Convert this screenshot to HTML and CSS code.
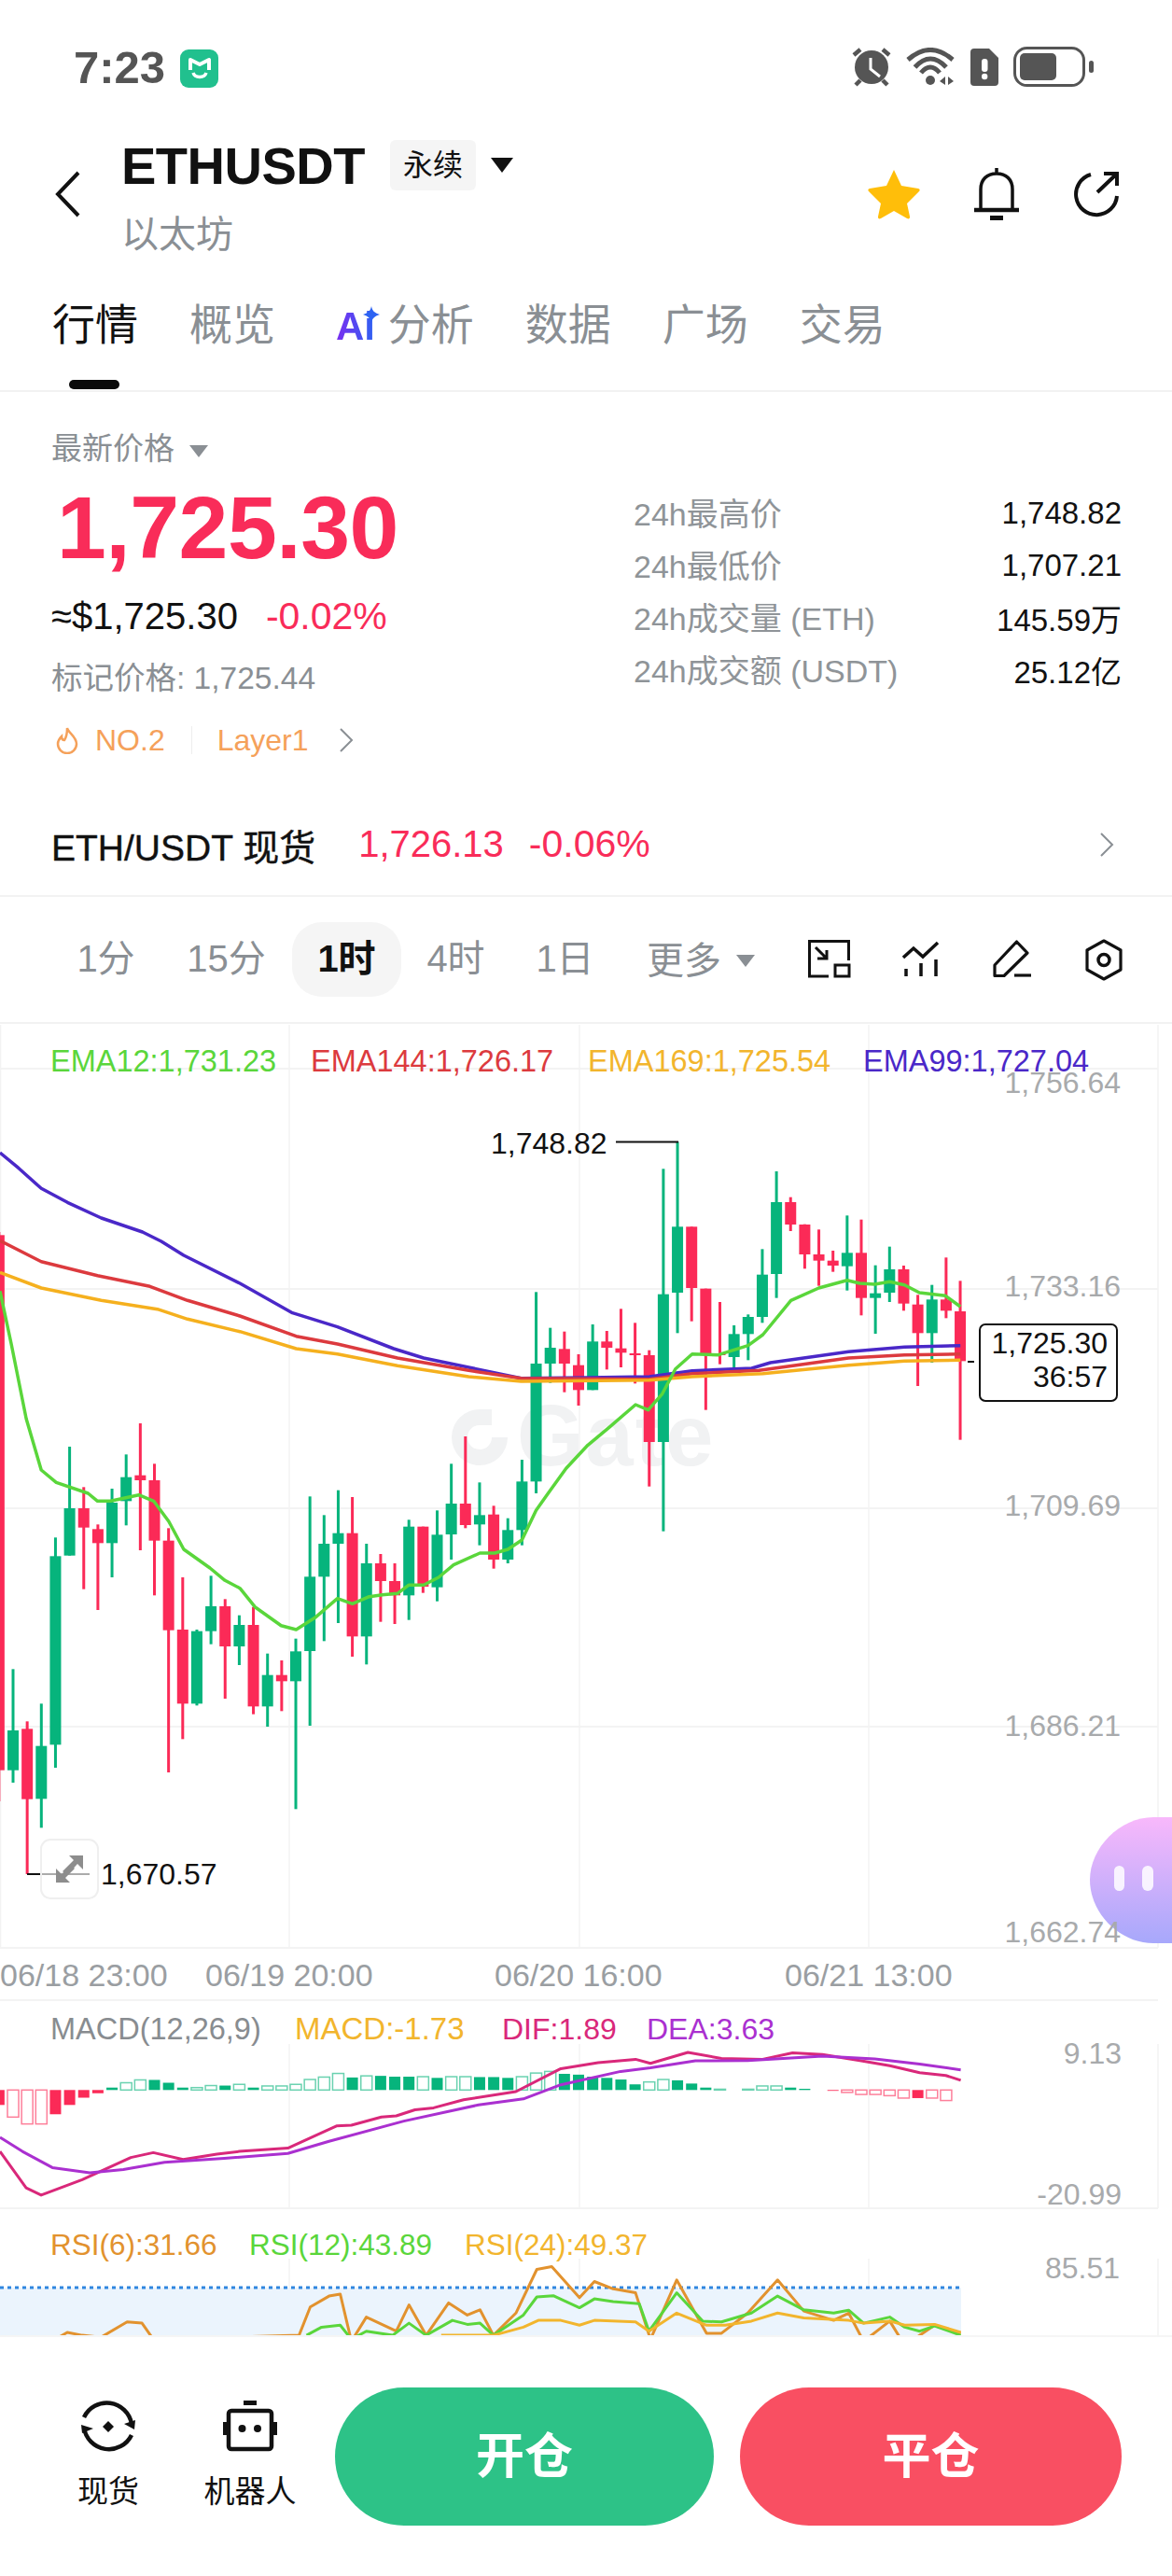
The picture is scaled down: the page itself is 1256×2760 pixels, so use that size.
FILE: index.html
```html
<!DOCTYPE html>
<html lang="zh-CN">
<head>
<meta charset="UTF-8">
<meta name="viewport" content="width=device-width, initial-scale=1.0">
<title>ETHUSDT</title>
<link rel="stylesheet" href="styles.css">
<script type="text/javascript" src="chart.js"></script>
</head>
<body>

<div class="status">
	<span class="clock">7:23</span>
	<svg class="mi" width="41" height="41" viewBox="0 0 41 41">
		<rect width="41" height="41" rx="9" fill="#21c08e"/>
		<path d="M11 22V11l10 5 10-5v11" fill="none" stroke="#fff" stroke-width="4" stroke-linejoin="round"/>
		<path d="M14 25c2 6 12 6 14 0" fill="none" stroke="#fff" stroke-width="3.500"/>
	</svg>
	<div class="status-right">
		<svg width="42" height="42" viewBox="0 0 42 42">
			<circle cx="21" cy="21" r="18" fill="#555"/>
			<path d="M20 11v12l10 8" fill="none" stroke="#fff" stroke-width="3"/>
			<path d="M2 8l7-6M40 8l-7-6M4 40l5-5M38 40l-5-5" stroke="#555" stroke-width="4.500" fill="none"/>
		</svg>
		<svg width="53" height="41" viewBox="0 0 53 41">
			<path d="M2 13Q26 -8 50 13M9.500 21Q26 3 43 21M16 27Q26 15 36 27" fill="none" stroke="#555" stroke-width="5"/>
			<circle cx="26" cy="35" r="5" fill="#555"/>
			<path d="M36 36l6-5v9zM45 31v9l6-4z" fill="#555"/>
		</svg>
		<svg width="30" height="40" viewBox="0 0 30 40">
			<path d="M4 0H20L30 10V36a4 4 0 0 1-4 4H4a4 4 0 0 1-4-4V4a4 4 0 0 1 4-4z" fill="#555"/>
			<rect x="12" y="11" width="6.500" height="14" rx="3" fill="#fff"/>
			<circle cx="15.200" cy="30" r="3.200" fill="#fff"/>
		</svg>
		<svg width="86" height="43" viewBox="0 0 86 43">
			<rect x="1.500" y="1.500" width="74" height="40" rx="13" fill="none" stroke="#555" stroke-width="3"/>
			<rect x="7" y="7" width="39" height="29" rx="5" fill="#555"/>
			<rect x="81" y="15" width="5" height="13" rx="2.500" fill="#555"/>
		</svg>
	</div>
</div>

<div class="head">
	<svg class="back" width="28" height="50" viewBox="0 0 28 50">
		<path d="M25 2L3 25l22 23" fill="none" stroke="#111" stroke-width="4"/>
	</svg>
	<div class="head-title">
		<div class="title-row">
			<span class="symbol">ETHUSDT</span>
			<span class="badge">永续</span>
			<span class="tri tri-black"></span>
		</div>
		<div class="sub">以太坊</div>
	</div>
	<div class="head-icons">
		<svg width="56" height="54" viewBox="0 0 56 54">
			<path d="M28 1l8 17 18 3c2 .500 2 2 1 3L42 37l3 14c.300 2-1 3-3 2L28 45l-14 8c-2 1-3.300 0-3-2l3-14L1 24c-1-1-1-2.500 1-3l18-3z" fill="#ffbe0a"/>
		</svg>
		<svg width="48" height="57" viewBox="0 0 48 57">
			<path d="M24 1v6M7 45V24C7 13 14 7 24 7s17 6 17 17v21" fill="none" stroke="#111" stroke-width="3.500"/>
			<path d="M0 46h48" stroke="#111" stroke-width="4.500"/>
			<rect x="17" y="52" width="14" height="5" fill="#111"/>
		</svg>
		<svg width="50" height="50" viewBox="0 0 50 50">
			<path d="M19 4A22 22 0 1 0 47 27" fill="none" stroke="#111" stroke-width="4"/>
			<path d="M26 23L46 4M33 3h14v13" fill="none" stroke="#111" stroke-width="4"/>
		</svg>
	</div>
</div>

<div class="tabs">
	<div class="tab tab-on">行情</div>
	<div class="tab">概览</div>
	<div class="tab tab-ai">
		<span class="ai">Ai</span>
		<svg class="spark" width="18" height="18" viewBox="0 0 18 18">
			<path d="M9 0c1 5 3 7 9 9-6 2-8 4-9 9-1-5-3-7-9-9 6-2 8-4 9-9z" fill="#2d63f2"/>
		</svg>
		分析
	</div>
	<div class="tab">数据</div>
	<div class="tab">广场</div>
	<div class="tab">交易</div>
</div>

<div class="quote">
	<div class="quote-left">
		<div class="latest">最新价格<span class="tri tri-gray"></span></div>
		<div class="price">1,725.30</div>
		<div class="usd">≈$1,725.30<span class="pct">-0.02%</span></div>
		<div class="mark">标记价格: 1,725.44</div>
		<div class="tags">
			<svg width="24" height="30" viewBox="0 0 24 30">
				<path d="M12 2c1 5 10 9 10 17a10 10 0 0 1-20 0c0-4 2-6 4-8 0 3 1 4 3 4 2-3 3-8 3-13z" fill="none" stroke="#f5a15a" stroke-width="2.500"/>
			</svg>
			<span class="tag-no">NO.2</span>
			<span class="tag-sep"></span>
			<span>Layer1</span>
			<svg class="tag-more" width="16" height="26" viewBox="0 0 16 26">
				<path d="M2 1l12 12L2 25" fill="none" stroke="#8a8f94" stroke-width="2"/>
			</svg>
		</div>
	</div>
	<div class="stats">
		<div class="stat"><span>24h最高价</span><b>1,748.82</b></div>
		<div class="stat"><span>24h最低价</span><b>1,707.21</b></div>
		<div class="stat"><span>24h成交量 (ETH)</span><b>145.59万</b></div>
		<div class="stat"><span>24h成交额 (USDT)</span><b>25.12亿</b></div>
	</div>
</div>

<div class="spot">
	<span class="spot-name">ETH/USDT 现货</span>
	<span class="spot-price">1,726.13</span>
	<span class="spot-pct">-0.06%</span>
	<svg class="spot-more" width="16" height="26" viewBox="0 0 16 26">
		<path d="M2 1l12 12L2 25" fill="none" stroke="#8a8f94" stroke-width="2"/>
	</svg>
</div>

<div class="frames">
	<div class="tf tf-gap">1分</div>
	<div class="tf tf-gap">15分</div>
	<div class="tf tf-on">1时</div>
	<div class="tf">4时</div>
	<div class="tf">1日</div>
	<div class="tf-more">更多<span class="tri tri-gray"></span></div>
	<div class="tools">
		<svg width="46" height="42" viewBox="0 0 46 42">
			<path d="M22 39H1.500V1.500H43.500V22" fill="none" stroke="#111" stroke-width="3"/>
			<rect x="29" y="27" width="15" height="12" fill="none" stroke="#111" stroke-width="3"/>
			<path d="M8 8l12 12M20 11v9h-10" fill="none" stroke="#111" stroke-width="3"/>
		</svg>
		<svg width="40" height="40" viewBox="0 0 40 40">
			<path d="M1 18L12 8l10 9L38 2" fill="none" stroke="#111" stroke-width="3.500"/>
			<path d="M4 30v8M20 24v14M36 20v18" fill="none" stroke="#111" stroke-width="3.500"/>
		</svg>
		<svg width="42" height="42" viewBox="0 0 42 42">
			<path d="M25.500 2L37 14 12 38.500H2V27z" fill="none" stroke="#111" stroke-width="3.200" stroke-linejoin="round"/>
			<path d="M23 38h18" stroke="#111" stroke-width="3.200"/>
		</svg>
		<svg width="40" height="45" viewBox="0 0 40 45">
			<path d="M20 2l18 10v21L20 43 2 33V12z" fill="none" stroke="#111" stroke-width="3.200" stroke-linejoin="round"/>
			<circle cx="20" cy="22.500" r="6" fill="none" stroke="#111" stroke-width="3.500"/>
		</svg>
	</div>
</div>

<div class="chart">
	<svg id="plot" width="1256" height="1405" viewBox="0 1097 1256 1405">
		<defs>
			<linearGradient id="bubble" x1="0" y1="0" x2="0" y2="1">
				<stop offset="0" stop-color="#f8b8fb"/>
				<stop offset="1" stop-color="#a7a8fb"/>
			</linearGradient>
		</defs>
		<g id="grid"></g>

		<!-- watermark -->
		<path d="M514 1510a30 30 0 1 0 30 30h-30v-13h13v-17z" fill="#f1f2f3"/>
		<circle cx="514" cy="1540" r="13" fill="#fff"/>
		<text class="watermark" x="554" y="1570">Gate</text>

		<g id="candles"></g>
		<g id="lines"></g>

		<text class="t leg c-green" x="54" y="1148">EMA12:1,731.23</text>
		<text class="t leg c-red" x="333" y="1148">EMA144:1,726.17</text>
		<text class="t leg c-yellow" x="630" y="1148">EMA169:1,725.54</text>
		<text class="t leg c-purple" x="925" y="1148">EMA99:1,727.04</text>

		<path d="M660 1223.500H727" stroke="#111" stroke-width="2"/>
		<text class="t" x="526" y="1236">1,748.82</text>
		<path d="M1037 1459H1044" stroke="#111" stroke-width="2"/>
		<rect class="tick-box" x="1050" y="1419" width="147" height="82" rx="6"/>
		<text class="t end" x="1187" y="1450">1,725.30</text>
		<text class="t end" x="1187" y="1486">36:57</text>

		<path d="M29 2008H96" stroke="#111" stroke-width="2"/>
		<rect class="expand" x="44" y="1971" width="61" height="63" rx="10"/>
		<path d="M89 1988H74l5 5-12 12 5 4 11-12 6 6zM60 2017h15l-5-5 10-10-4-4-10 10-6-6z" fill="#8d8d8d"/>
		<text class="t" x="108" y="2019">1,670.57</text>

		<path d="M1256 1947h-20c-36 0-68 33-68 67 0 36 32 68 68 68h20z" fill="url(#bubble)"/>
		<rect x="1194" y="1999" width="11" height="27" rx="5.500" fill="#fff" opacity=".85"/>
		<rect x="1224" y="1999" width="12" height="27" rx="6" fill="#fff" opacity=".85"/>

		<text class="t end axis" x="1201" y="1171">1,756.64</text>
		<text class="t end axis" x="1201" y="1389">1,733.16</text>
		<text class="t end axis" x="1201" y="1624">1,709.69</text>
		<text class="t end axis" x="1201" y="1860">1,686.21</text>
		<text class="t end axis" x="1201" y="2081">1,662.74</text>

		<text class="t time" x="0" y="2128">06/18 23:00</text>
		<text class="t time" x="220" y="2128">06/19 20:00</text>
		<text class="t time" x="530" y="2128">06/20 16:00</text>
		<text class="t time" x="841" y="2128">06/21 13:00</text>

		<text class="t leg c-gray" x="54" y="2185">MACD(12,26,9)</text>
		<text class="t macd-val c-yellow" x="316" y="2185">MACD:-1.73</text>
		<text class="t c-pink" x="538" y="2185">DIF:1.89</text>
		<text class="t c-violet" x="693" y="2185">DEA:3.63</text>
		<text class="t end axis" x="1202" y="2211">9.13</text>
		<text class="t end axis" x="1202" y="2362">-20.99</text>

		<text class="t rsi c-orange" x="54" y="2416">RSI(6):31.66</text>
		<text class="t rsi c-green" x="267" y="2416">RSI(12):43.89</text>
		<text class="t rsi c-yellow" x="498" y="2416">RSI(24):49.37</text>
		<text class="t end axis" x="1200" y="2441">85.51</text>
	</svg>
</div>

<div class="nav">
	<div class="nav-item">
		<svg width="58" height="58" viewBox="0 0 58 58">
			<path d="M3 19A27 27 0 0 1 54 26M54 38A27 27 0 0 1 3 30" fill="none" stroke="#111" stroke-width="4.500"/>
			<path d="M46 26l12-4-1 10zM0 27l13 4-12 5z" fill="#111"/>
			<path d="M29 23l6 6-6 6-6-6z" fill="#111"/>
		</svg>
		<span>现货</span>
	</div>
	<div class="nav-item">
		<svg width="58" height="58" viewBox="0 0 58 58">
			<rect x="22" y="1" width="14" height="5" fill="#111"/>
			<rect x="6" y="12" width="46" height="41" rx="3" fill="none" stroke="#111" stroke-width="4.500"/>
			<rect x="0" y="24" width="5" height="14" fill="#111"/>
			<rect x="53" y="24" width="5" height="14" fill="#111"/>
			<circle cx="20.500" cy="31" r="4" fill="#111"/>
			<circle cx="37" cy="31" r="4" fill="#111"/>
		</svg>
		<span>机器人</span>
	</div>
	<div class="btn btn-open">开仓</div>
	<div class="btn btn-close">平仓</div>
</div>

</body>
</html>
```

FILE: styles.css
```css
*{
	margin: 0;
	padding: 0;
	box-sizing: border-box;
}
html,body{
	width: 1256px;
	height: 2760px;
	overflow: hidden;
}
body{
	background-color: #fff;
	color: #111;
	font-family: "Liberation Sans", "Noto Sans CJK SC", sans-serif;
}
svg{
	display: block;
	flex: none;
}

/* triangles next to labels */
.tri{
	display: inline-block;
	width: 0;
	height: 0;
	border-style: solid;
	border-color: transparent;
	border-width: 16px 12px 0 12px;
}
.tri-black{
	border-top-color: #111;
	margin-left: 16px;
}
.tri-gray{
	border-width: 13px 10px 0 10px;
	border-top-color: #8a8f94;
	margin-left: 16px;
	vertical-align: middle;
}

/* status bar */
.status{
	height: 130px;
	padding: 50px 84px 0 79px;
	display: flex;
	align-items: flex-start;
}
.clock{
	font-size: 49px;
	line-height: 44px;
	font-weight: bold;
	color: #555;
}
.mi{
	margin: 3px 0 0 16px;
}
.status-right{
	margin-left: auto;
	display: flex;
	align-items: center;
	gap: 16px;
	height: 43px;
}

/* title */
.head{
	margin-top: 18px;
	height: 125px;
	padding-left: 59px;
	display: flex;
	align-items: center;
}
.back{
	margin-top: -6px;
}
.head-title{
	margin-left: 43px;
}
.title-row{
	display: flex;
	align-items: center;
	height: 58px;
}
.symbol{
	font-size: 56px;
	font-weight: bold;
	letter-spacing: -.5px;
}
.badge{
	margin-left: 27px;
	width: 92px;
	height: 54px;
	line-height: 54px;
	text-align: center;
	font-size: 32px;
	background-color: #f5f5f5;
	border-radius: 6px;
}
.sub{
	margin-top: 23px;
	font-size: 40px;
	line-height: 44px;
	color: #8a8f94;
}
.head-icons{
	margin-left: auto;
	padding: 0 56px 6px 0;
	display: flex;
	align-items: center;
	gap: 58px;
}

/* tabs */
.tabs{
	margin-top: 45px;
	height: 102px;
	padding-left: 56px;
	display: flex;
	gap: 55px;
	border-bottom: 2px solid #f2f2f2;
}
.tab{
	position: relative;
	font-size: 46px;
	line-height: 60px;
	color: #8a8f94;
}
.tab-on{
	color: #111;
}
.tab-on::after{
	content: "";
	position: absolute;
	left: 18px;
	top: 89px;
	width: 54px;
	height: 10px;
	border-radius: 5px;
	background-color: #0a0a0a;
}
.tab-ai{
	margin-left: 10px;
}
.ai{
	font-size: 42px;
	font-weight: bold;
	margin-right: 1px;
	background: linear-gradient(to right, #7a2df0, #2d63f2);
	-webkit-background-clip: text;
	background-clip: text;
	color: transparent;
}
.spark{
	position: absolute;
	left: 29px;
	top: 10px;
}

/* price block */
.quote{
	height: 430px;
	padding: 39px 54px 0 55px;
	display: flex;
	justify-content: space-between;
}
.latest{
	font-size: 33px;
	line-height: 44px;
	color: #8a8f94;
}
.price{
	margin-top: 12px;
	font-size: 95px;
	line-height: 100px;
	font-weight: bold;
	color: #f92c59;
	letter-spacing: -.5px;
	padding-left: 6px;
}
.usd{
	margin-top: 20px;
	font-size: 40px;
	line-height: 50px;
}
.pct{
	margin-left: 30px;
	font-size: 41px;
	color: #f92c59;
}
.mark{
	margin-top: 20px;
	font-size: 33.500px;
	line-height: 44px;
	color: #8a8f94;
}
.tags{
	margin-top: 22px;
	height: 44px;
	padding-left: 5px;
	display: flex;
	align-items: center;
	font-size: 32px;
	color: #f5a15a;
}
.tag-no{
	margin-left: 18px;
}
.tag-sep{
	margin: 0 27px 0 28px;
	width: 1px;
	height: 30px;
	background-color: #eee;
}
.tag-more{
	margin-left: 32px;
}
.stats{
	width: 523px;
	margin-top: 63px;
}
.stat{
	height: 56px;
	display: flex;
	align-items: center;
	justify-content: space-between;
	font-size: 33px;
	color: #8f9498;
}
.stat span{
	font-size: 34px;
	margin-top: -3px;
}
.stat b{
	font-weight: normal;
	color: #111;
}

/* spot row */
.spot{
	height: 111px;
	padding: 0 62px 0 55px;
	display: flex;
	align-items: center;
	border-bottom: 2px solid #f2f2f2;
	font-size: 39px;
}
.spot-name{
	-webkit-text-stroke: .4px #111;
}
.spot-price{
	margin-left: 46px;
	font-size: 40px;
	color: #f92c59;
}
.spot-pct{
	margin-left: 27px;
	font-size: 41px;
	color: #f92c59;
}
.spot-more{
	margin-left: auto;
}

/* time frames */
.frames{
	height: 136px;
	padding-left: 55px;
	display: flex;
	align-items: center;
	border-bottom: 2px solid #f2f2f2;
	font-size: 40px;
	color: #8a8f94;
}
.tf{
	width: 117px;
	height: 80px;
	line-height: 78px;
	text-align: center;
}
.tf-gap{
	margin-right: 12px;
}
.tf-on{
	background-color: #f5f5f5;
	border-radius: 32px;
	color: #111;
	font-weight: bold;
}
.tf-more{
	margin: 0 0 4px 29px;
}
.tf-more .tri{
	vertical-align: 7px;
}
.tools{
	margin-left: auto;
	padding-right: 53px;
	display: flex;
	align-items: center;
	gap: 57px;
}
.tools svg:first-child{
	margin-right: -2px;
}

/* chart */
.chart{
	height: 1405px;
	overflow: hidden;
}
.t{
	font-family: "Liberation Sans", "Noto Sans CJK SC", sans-serif;
	font-size: 32px;
	fill: #111;
}
.leg{
	font-size: 32.500px;
}
.macd-val{
	font-size: 33px;
}
.rsi{
	font-size: 31.500px;
}
.end{
	text-anchor: end;
}
.axis{
	fill: #a8aaac;
}
.time{
	font-size: 34px;
	fill: #9a9ea2;
}
.c-green{
	fill: #5ad63b;
}
.c-red{
	fill: #dc3a3e;
}
.c-yellow{
	fill: #f2b52d;
}
.c-purple{
	fill: #4a28c8;
}
.c-gray{
	fill: #888c90;
}
.c-pink{
	fill: #d9287a;
}
.c-violet{
	fill: #aa30d0;
}
.c-orange{
	fill: #e2922e;
}
.watermark{
	font-family: "Liberation Sans", sans-serif;
	font-size: 92px;
	font-weight: bold;
	letter-spacing: 2px;
	fill: #f1f2f3;
}
.tick-box{
	fill: #fff;
	stroke: #111;
	stroke-width: 2;
}
.expand{
	fill: rgba(255, 255, 255, .65);
	stroke: #efefef;
	stroke-width: 2;
}

/* bottom bar */
.nav{
	height: 258px;
	padding: 54px 54px 0 66px;
	display: flex;
	align-items: flex-start;
	background-color: #fff;
	border-top: 2px solid #f5f5f5;
}
.nav-item{
	width: 100px;
	margin-right: 52px;
	padding-top: 13px;
	display: flex;
	flex-direction: column;
	align-items: center;
	font-size: 33px;
}
.nav-item span{
	margin-top: 19px;
	line-height: 44px;
}
.nav-item:nth-child(2){
	margin-right: 41px;
}
.btn{
	width: 406px;
	height: 148px;
	line-height: 148px;
	border-radius: 74px;
	text-align: center;
	font-size: 52px;
	font-weight: bold;
	color: #fff;
}
.btn-open{
	background-color: #2dc287;
}
.btn-close{
	margin-left: 28px;
	width: 409px;
	background-color: #f94f62;
}
```

FILE: chart.js
```js
var GREEN = '#06b47c';
var RED = '#fb2a57';
var NS = 'http://www.w3.org/2000/svg';

// wick top, body top, body bottom, wick bottom, read in thirds of a pixel from y=1100
// first candle sits at index -1
var candles = [
	['r',660,670,2390,2490],
	['g',2065,2262,2390,2430],['r',2233,2257,2483,2724],['g',2176,2312,2482,2575],['g',1642,1702,2308,2382],
	['g',1350,1548,1700,1700],['r',1480,1548,1610,1808],['r',1600,1615,1660,1875],['g',1485,1530,1660,1770],
	['g',1375,1448,1525,1603],['r',1275,1442,1458,1683],['r',1405,1458,1652,1828],['r',1612,1652,1940,2397],
	['r',1770,1938,2176,2290],['g',1938,1943,2176,2182],['g',1765,1863,1943,1985],['r',1840,1863,1992,2160],
	['g',1892,1923,1992,2052],['r',1865,1923,2185,2210],['g',2015,2084,2185,2250],['r',2037,2084,2104,2200],
	['g',1967,2008,2104,2515],['g',1510,1768,2007,2247],['g',1570,1662,1768,1975],['g',1490,1628,1662,1917],
	['r',1512,1628,1960,2025],['g',1662,1725,1960,2050],['r',1695,1725,1782,1913],['r',1725,1782,1828,1920],
	['g',1585,1607,1828,1907],['r',1607,1607,1800,1820],['g',1555,1633,1802,1847],['g',1405,1533,1632,1713],
	['r',1317,1533,1602,1612],['g',1465,1570,1600,1667],['r',1540,1568,1713,1742],['g',1580,1618,1713,1725],
	['g',1392,1462,1618,1667],['g',853,1083,1462,1500],['g',968,1032,1083,1145],['r',980,1036,1083,1175],
	['r',1053,1088,1168,1218],['g',957,1012,1168,1168],['r',978,1012,1032,1102],['r',907,1034,1048,1095],
	['r',952,1050,1056,1147],['r',1040,1056,1335,1478],['g',457,860,1335,1622],['g',370,643,855,985],
	['r',643,643,840,947],['r',842,842,1050,1232],['r',885,1050,1056,1085],['g',960,988,1062,1100],
	['g',925,933,988,1072],['g',715,797,933,952],['g',465,564,795,872],['r',548,564,636,657],
	['r',635,636,732,778],['r',652,732,752,833],['r',720,752,768,788],['g',607,727,770,848],
	['r',620,727,872,928],['g',767,857,872,987],['g',707,780,855,885],['r',768,780,890,913],
	['r',862,893,985,1155],['g',830,877,985,1080],['r',742,877,913,937],['r',817,915,1075,1328]
];

// moving averages: left part from one crop, right part from another
var ema = [
	{color:'#4a28c8', left:[0,405,50,455,110,520,180,565,270,615,380,660,430,690,490,735,640,825,780,920,900,965,1050,1035,1130,1065,1250,1095,1390,1130,1568,1128],
		right:[165,1125,280,1106,440,1098,490,1080,700,1045,850,1030,1000,1025]},
	{color:'#dc3a3e', left:[0,688,110,755,260,800,400,835,500,880,640,930,790,995,900,1020,1060,1065,1250,1105,1390,1130],
		right:[165,1133,280,1115,460,1105,700,1065,850,1055,1000,1052]},
	{color:'#f5b01e', left:[0,790,110,840,270,880,420,908,500,940,640,980,790,1035,900,1052,1060,1090,1250,1125,1390,1140],
		right:[165,1136,280,1125,470,1115,700,1088,850,1075,1000,1072]},
	{color:'#5ad63b', left:[0,850,30,1020,70,1260,110,1425,150,1465,235,1500,260,1525,295,1525,370,1505,410,1525,450,1590,490,1680,560,1740,600,1780,640,1805,680,1865,750,1925,790,1938,840,1900,900,1838,940,1855,985,1832,1020,1826,1060,1822,1090,1795,1130,1795,1170,1770,1210,1730,1280,1692,1320,1692,1355,1680,1392,1650,1430,1555,1462,1500,1510,1420,1568,1345],
		right:[60,1285,128,1215,162,1232,200,1180,235,1100,280,1052,350,1055,430,1025,470,990,545,880,620,840,696,815,730,825,770,828,810,820,850,830,890,855,960,865,1000,900]}
];

var dif = [0,520,35,610,55,628,110,590,175,535,205,523,245,540,290,527,320,520,385,512,450,457,470,455,510,435,530,432,555,417,580,412,620,392,690,372,750,315,800,300,850,292,870,302,920,275,965,290,1020,292,1060,276,1100,280,1150,295,1190,308,1230,325,1265,332,1285,344];
var dea = [0,485,30,520,70,560,120,573,165,565,220,547,300,537,385,525,440,495,540,445,640,405,700,390,750,355,830,322,870,313,930,296,1000,295,1100,284,1170,291,1230,304,1285,318];

// histogram from index -1, h marks a hollow bar
var macd = [-37,'-67h','-84h','-84h',-60,-37,-19,-8,6,'18h','25h',25,18,6,'6h','11h',11,'14h',6,'10h','10h','14h','26h','32h','41h',31,'35h',35,33,33,'33h',30,'33h','33h',32,32,30,'33h','42h','46h',40,38,33,30,26,14,'20h','26h',24,16,6,'2h',0,'2h','10h','10h',6,3,0,-2,'-6h','-11h','-11h','-14h','-20h',-20,'-20h','-26h'];

var rsi = [
	{color:'#e2922e', pts:[60,1000,90,968,110,975,135,980,170,942,190,945,205,985,400,975,415,905,440,878,455,873,470,990,490,930,530,965,547,900,570,975,600,895,625,925,642,912,660,975,690,920,718,812,738,805,775,882,795,842,820,860,850,870,870,985,905,838,945,970,965,970,1000,920,1040,838,1075,915,1115,938,1135,920,1155,990,1190,940,1210,1000,1250,950,1285,970]},
	{color:'#5ad63b', pts:[410,975,430,955,455,950,470,985,490,965,525,975,547,945,570,975,605,938,625,948,642,945,660,975,700,925,718,880,740,877,775,907,795,885,820,892,855,897,868,965,905,870,940,940,965,942,1005,920,1040,878,1075,912,1115,920,1135,913,1155,945,1190,930,1210,955,1230,965,1250,952,1285,975]},
	{color:'#f2b52d', pts:[590,975,640,975,660,975,700,955,720,938,750,938,775,950,795,938,850,942,868,965,905,920,945,950,970,950,1005,940,1040,920,1075,932,1135,938,1155,945,1190,940,1210,950,1250,948,1285,968]}
];

function add(parent, tag, attrs){
	var el = document.createElementNS(NS, tag);
	for (var k in attrs) {
		el.setAttribute(k, attrs[k]);
	}
	parent.appendChild(el);
	return el;
}

function candleX(i){
	return 14 + 15.15 * i;
}

function priceY(z){
	return 1100 + z / 3;
}

// turn crop readings into "x,y" pairs
function toPoints(arr, fx, fy){
	var out = [];
	for (var i = 0; i < arr.length; i += 2) {
		out.push(fx(arr[i]).toFixed(1) + ',' + fy(arr[i + 1]).toFixed(1));
	}
	return out;
}

function line(parent, pts, color, width){
	add(parent, 'polyline', {
		points: pts.join(' '),
		fill: 'none',
		stroke: color,
		'stroke-width': width,
		'stroke-linejoin': 'round'
	});
}

function drawGrid(g){
	var c = '#f3f3f3';
	var rows = [1145, 1381, 1616, 1850, 2087, 2143, 2366];
	var cols = [310, 621, 931, 1241];
	var spans = [[1098, 2087], [2190, 2366], [2420, 2502]];
	rows.forEach(function(y){
		add(g, 'line', {x1:0, x2:1241, y1:y, y2:y, stroke:c, 'stroke-width':2});
	});
	cols.forEach(function(x){
		spans.forEach(function(s){
			add(g, 'line', {x1:x, x2:x, y1:s[0], y2:s[1], stroke:c, 'stroke-width':1.5});
		});
	});
	add(g, 'line', {x1:0.5, x2:0.5, y1:1098, y2:2087, stroke:c, 'stroke-width':1.5});
}

function drawCandles(g){
	candles.forEach(function(c, n){
		var x = candleX(n - 1);
		var color = c[0] == 'g' ? GREEN : RED;
		add(g, 'rect', {x:x - 1.5, y:priceY(c[1]), width:3, height:(c[4] - c[1]) / 3, fill:color});
		add(g, 'rect', {x:x - 6, y:priceY(c[2]), width:12, height:(c[3] - c[2]) / 3, fill:color});
	});
}

function drawMacd(g){
	var base = 2239.3;
	macd.forEach(function(v, n){
		var hollow = typeof v == 'string';
		var val = parseFloat(v);
		if (val == 0) {
			return;
		}
		var h = Math.abs(val) / 2.31;
		var y = val > 0 ? base - h : base;
		var color = val > 0 ? GREEN : RED;
		var attrs = {x:candleX(n - 1) - 6, y:y, width:12, height:h, fill:color};
		if (hollow) {
			attrs.fill = '#fff';
			attrs.stroke = color;
			attrs['stroke-width'] = 1.5;
			attrs['stroke-opacity'] = 0.6;
		}
		add(g, 'rect', attrs);
	});
}

function drawLines(g){
	function leftX(z){ return z / 2.489; }
	function rightX(z){ return 630 + z / 2.505; }
	function lowX(z){ return z / 1.248; }
	function lowY(z){ return 2080 + z / 2.31; }

	// rsi band goes first so the lines stay on top
	add(g, 'rect', {x:0, y:2451, width:1030, height:51, fill:'#ebf4fd'});
	add(g, 'line', {x1:0, x2:1030, y1:2451, y2:2451, stroke:'#2f86e0', 'stroke-width':3, 'stroke-dasharray':'4 4'});

	ema.forEach(function(e){
		var pts = toPoints(e.left, leftX, priceY).concat(toPoints(e.right, rightX, priceY));
		line(g, pts, e.color, 3.5);
	});
	line(g, toPoints(dif, lowX, lowY), '#d9287a', 3);
	line(g, toPoints(dea, lowX, lowY), '#aa30d0', 3);
	rsi.forEach(function(r){
		line(g, toPoints(r.pts, lowX, lowY), r.color, 3);
	});
}

window.onload = function(){
	drawGrid(document.getElementById('grid'));
	var candleGroup = document.getElementById('candles');
	drawCandles(candleGroup);
	drawMacd(candleGroup);
	drawLines(document.getElementById('lines'));
};
```
